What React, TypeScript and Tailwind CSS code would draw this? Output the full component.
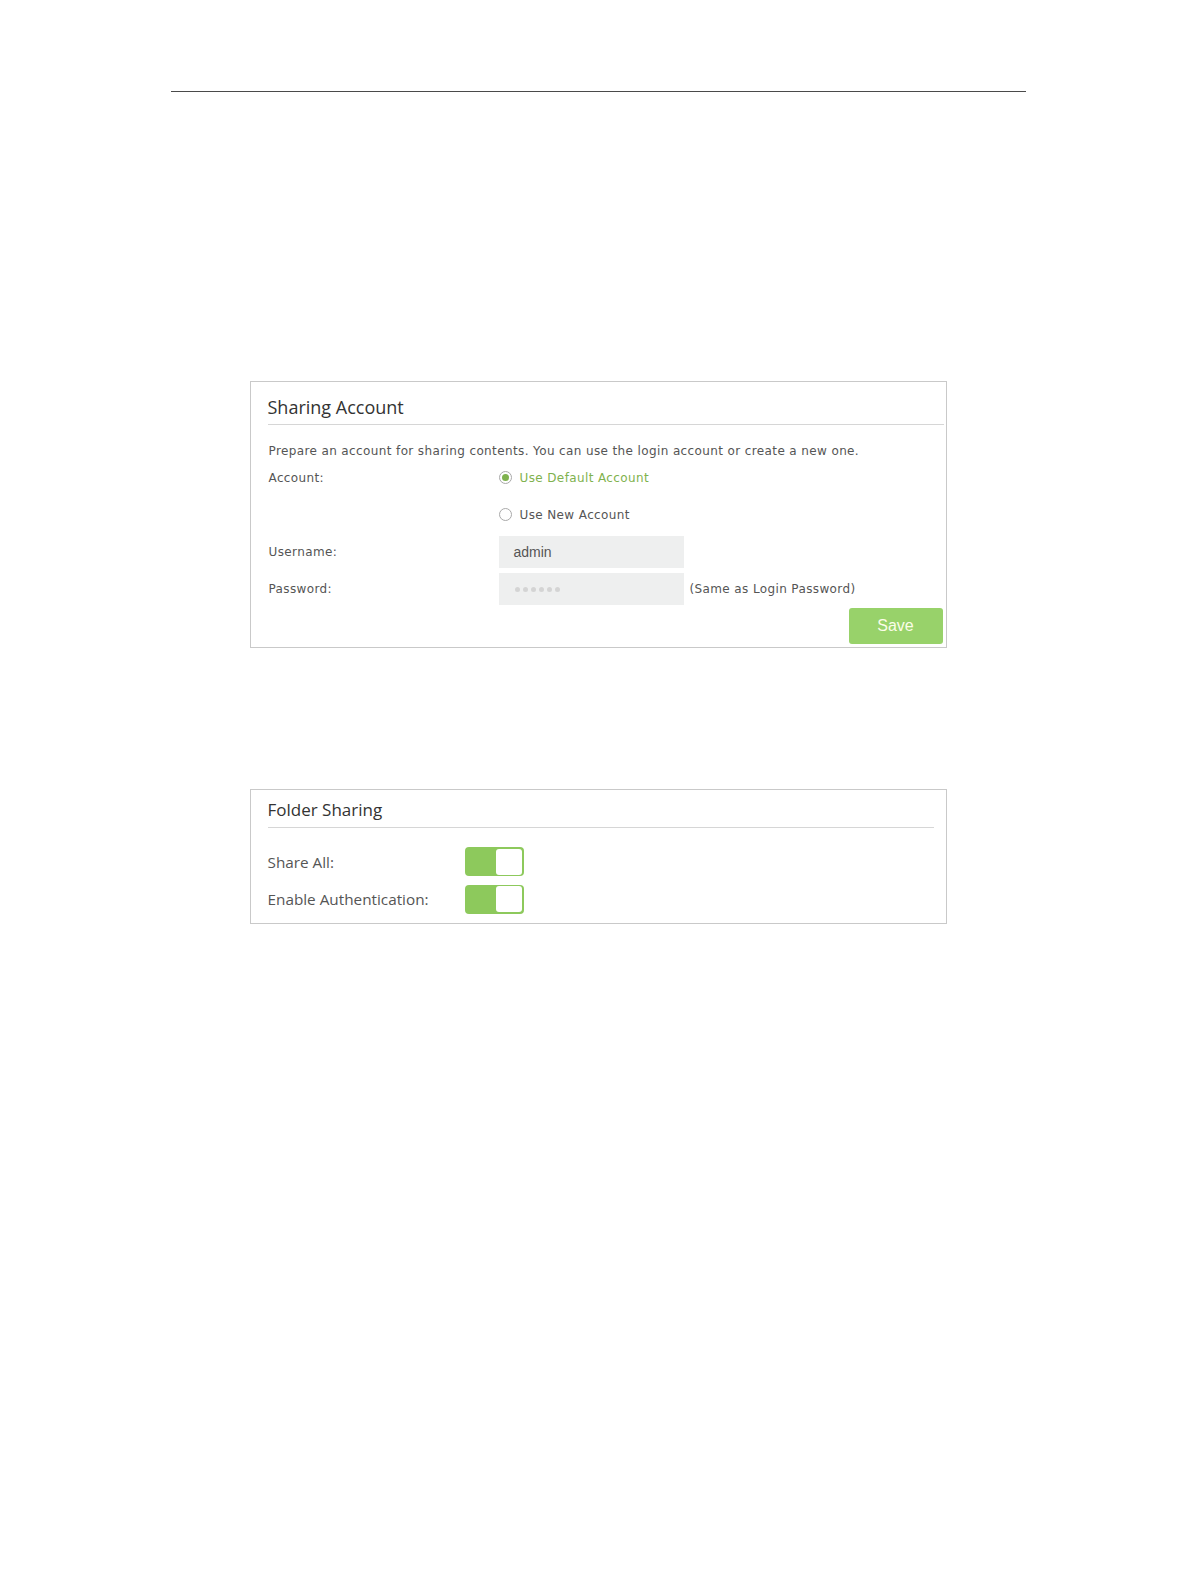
import React from "react";

const verdana = "font-['DejaVu_Sans',Verdana,sans-serif]";
const segoe = "font-['Open_Sans','Noto_Sans',sans-serif]";

function Radio({ checked }: { checked: boolean }) {
  return (
    <span className="flex h-[13px] w-[13px] items-center justify-center rounded-full border border-[#a9a9a9] bg-white">
      {checked && <span className="h-[7px] w-[7px] rounded-full bg-[#7fb24e]" />}
    </span>
  );
}

function Toggle() {
  return (
    <div className="flex h-[29px] w-[59px] rounded-[4px] bg-[#8dc95c] p-[1.5px]">
      <div className="ml-auto h-full w-[26px] rounded-[3px] bg-white" />
    </div>
  );
}

function SharingAccount() {
  return (
    <div className="w-[697px] border border-[#c9c9c9] bg-white">
      <div className="mx-[17px] mr-[2px] flex h-[43px] items-end border-b border-[#d6d6d6] pb-[4px]">
        <h2 className={`${segoe} text-[18px] leading-[26px] text-[#333]`}>Sharing Account</h2>
      </div>
      <div className={`${verdana} px-[18px] text-[12px] tracking-[0.38px] text-[#555]`}>
        <p className="pt-[18px] leading-4">
          Prepare an account for sharing contents. You can use the login account or create a new one.
        </p>
        <div className="flex h-[37px] items-center">
          <span className="w-[230px]">Account:</span>
          <label className="flex items-center gap-[8px] text-[#7fb24e]">
            <Radio checked />
            Use Default Account
          </label>
        </div>
        <div className="flex h-[37px] items-center">
          <span className="w-[230px]" />
          <label className="flex items-center gap-[8px]">
            <Radio checked={false} />
            Use New Account
          </label>
        </div>
        <div className="mt-[3px] flex h-8 items-center">
          <span className="w-[230px]">Username:</span>
          <div className="flex h-8 w-[185px] items-center bg-[#eeefef] px-[15px] font-['Liberation_Sans',Arial,sans-serif] text-[14px] tracking-normal text-[#555]">
            admin
          </div>
        </div>
        <div className="mt-[5px] flex h-8 items-center">
          <span className="w-[230px]">Password:</span>
          <div className="flex h-8 w-[185px] items-center gap-[3px] bg-[#eeefef] px-[16px]">
            {[0, 1, 2, 3, 4, 5].map((i) => (
              <span key={i} className="h-[5px] w-[5px] rounded-full bg-[#d4d4d4]" />
            ))}
          </div>
          <span className="ml-[6px]">(Same as Login Password)</span>
        </div>
        <div className="mt-[3px] flex justify-end pb-[3px]">
          <button className="-mr-[15px] h-9 w-[94px] rounded-[3px] bg-[#98d26a] font-['Liberation_Sans',Arial,sans-serif] text-[16px] tracking-normal text-[#fbfde8]">
            Save
          </button>
        </div>
      </div>
    </div>
  );
}

function FolderSharing() {
  return (
    <div className="w-[697px] border border-[#c9c9c9] bg-white">
      <div className="mx-[17px] mr-[12px] flex h-[38px] items-end border-b border-[#d6d6d6] pb-[5px]">
        <h2 className={`${segoe} text-[17px] leading-[24px] text-[#333]`}>Folder Sharing</h2>
      </div>
      <div className={`${segoe} pl-[17px] pr-[18px] pt-[19px] pb-[10px] text-[15.3px] text-[#555]`}>
        <div className="flex h-[29px] items-center">
          <span className="w-[197px] pt-[2px]">Share All:</span>
          <Toggle />
        </div>
        <div className="mt-[9px] flex h-[28px] items-center">
          <span className="w-[197px]">Enable Authentication:</span>
          <Toggle />
        </div>
      </div>
    </div>
  );
}

export default function App() {
  return (
    <div className="flex min-h-[1582px] w-full flex-col items-center bg-white pt-[91px]">
      <div className="h-px w-[855px] bg-[#4a4a4a]" />
      <div className="mt-[289px]">
        <SharingAccount />
      </div>
      <div className="mt-[141px]">
        <FolderSharing />
      </div>
    </div>
  );
}
